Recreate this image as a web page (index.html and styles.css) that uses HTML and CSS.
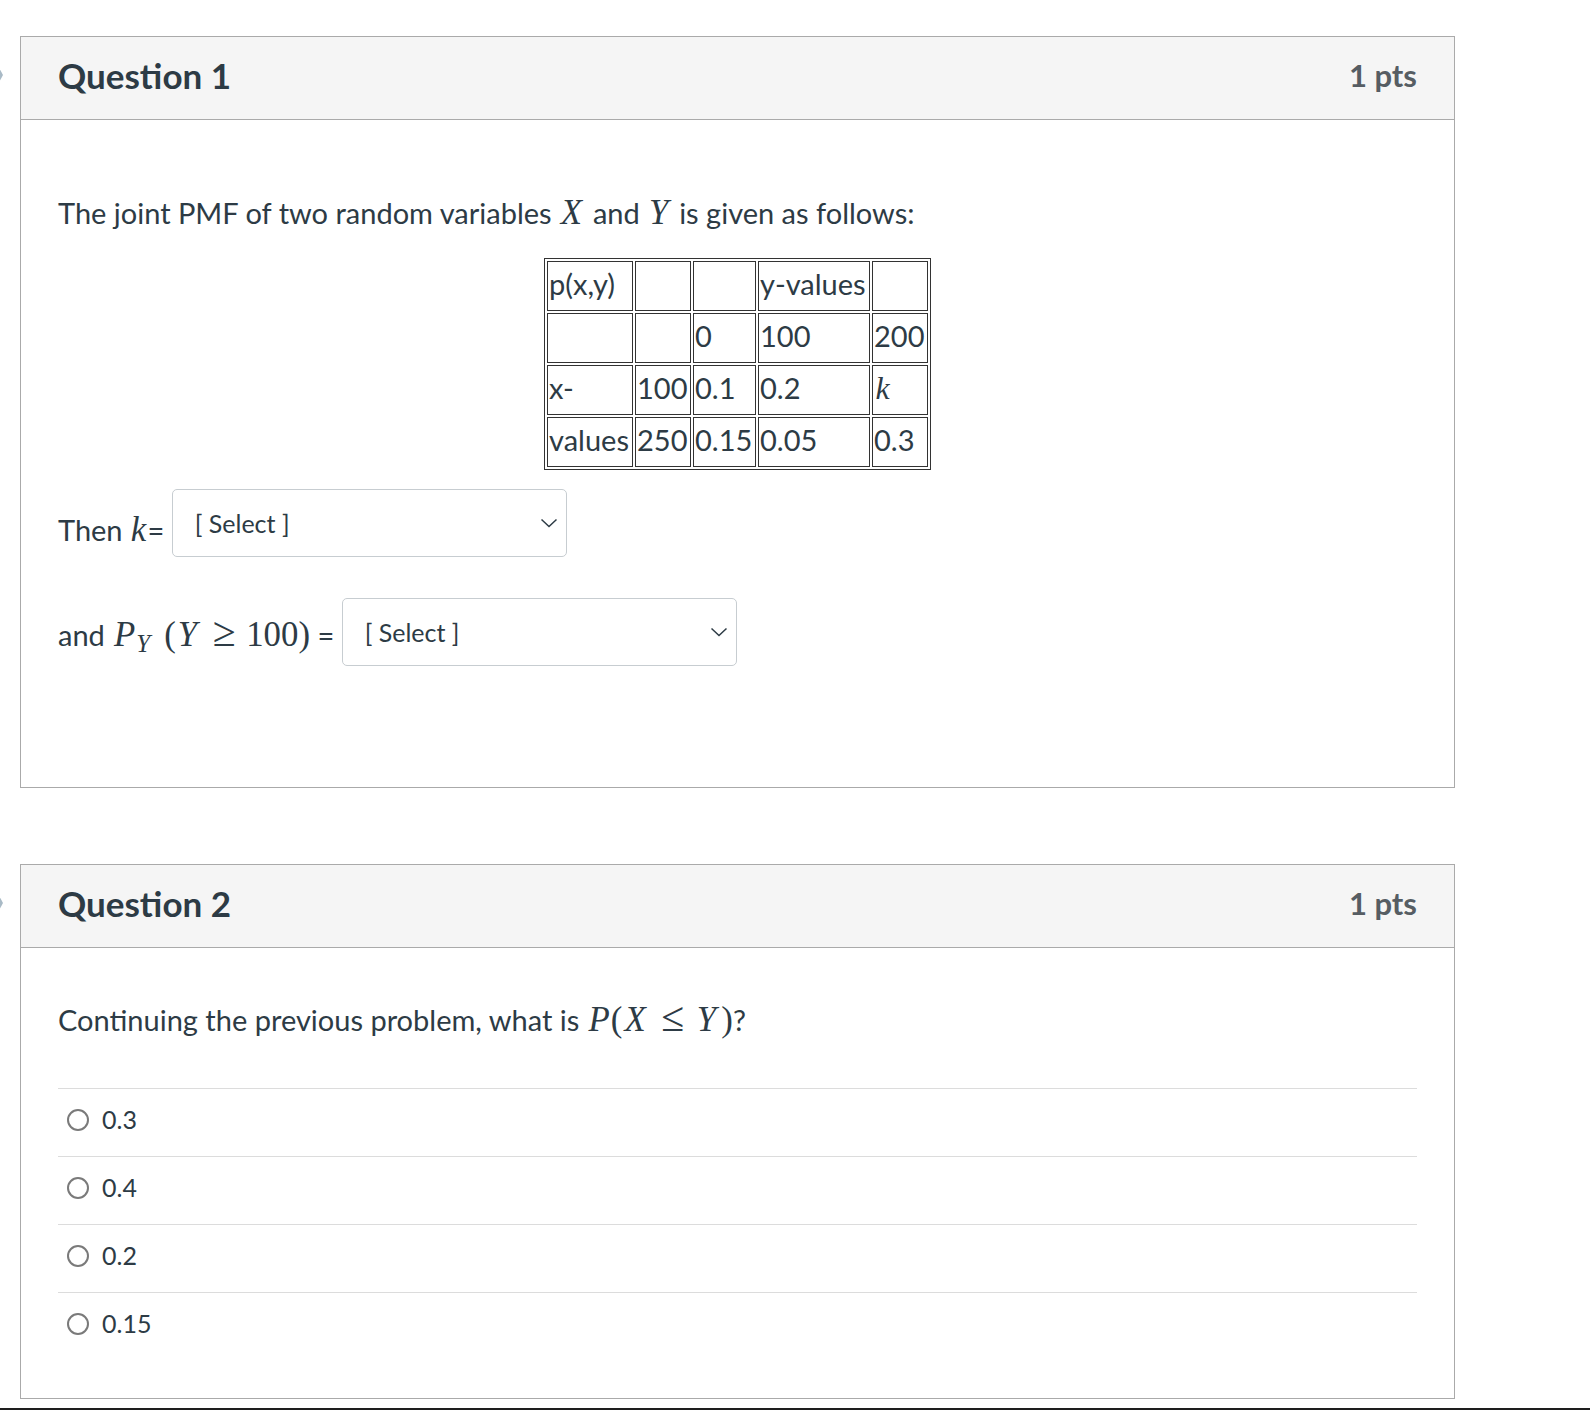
FILE: index.html
```html
<!DOCTYPE html>
<html>
<head>
<meta charset="utf-8">
<link rel="stylesheet" href="styles.css">
</head>
<body>
<div class="page">
  <div class="card card-q1">
    <svg class="flag" width="10" height="24" viewBox="0 0 10 24"><path d="M0 1 L6 12 L0 23 Z" fill="#a9bac6"/></svg>
    <div class="card-header">
      <h2 class="q-title">Question 1</h2>
      <span class="q-pts">1 pts</span>
    </div>
    <div class="card-body body-q1">
      <p class="intro">The joint PMF of two random variables <span class="math"><i>X</i></span> and <span class="math"><i>Y</i></span> is given as follows:</p>
      <table class="pmf">
        <tr><td class="c1">p(x,y)</td><td class="c2"></td><td class="c3"></td><td class="c4">y-values</td><td class="c5"></td></tr>
        <tr><td></td><td></td><td>0</td><td>100</td><td>200</td></tr>
        <tr><td>x-</td><td>100</td><td>0.1</td><td>0.2</td><td><span class="math mk"><i>k</i></span></td></tr>
        <tr><td>values</td><td>250</td><td>0.15</td><td>0.05</td><td>0.3</td></tr>
      </table>
      <p class="line-then">Then <span class="math"><i class="ik">k</i></span>= <span class="select sel-a"><span class="sel-text">[ Select ]</span><svg class="chev" width="18" height="10" viewBox="0 0 18 10"><path d="M1.5 1.5 L9 8.5 L16.5 1.5" fill="none" stroke="#2d3b45" stroke-width="1.5"/></svg></span></p>
      <p class="line-and">and <span class="math"><i class="ip">P</i><sub class="msub">Y</sub><span class="msp"></span>(<i class="iw">Y</i><span class="rel">≥</span>100)</span> = <span class="select sel-b"><span class="sel-text">[ Select ]</span><svg class="chev" width="18" height="10" viewBox="0 0 18 10"><path d="M1.5 1.5 L9 8.5 L16.5 1.5" fill="none" stroke="#2d3b45" stroke-width="1.5"/></svg></span></p>
    </div>
  </div>

  <div class="card card-q2">
    <svg class="flag" width="10" height="24" viewBox="0 0 10 24"><path d="M0 1 L6 12 L0 23 Z" fill="#a9bac6"/></svg>
    <div class="card-header">
      <h2 class="q-title">Question 2</h2>
      <span class="q-pts">1 pts</span>
    </div>
    <div class="card-body body-q2">
      <p class="intro2">Continuing the previous problem, what is <span class="math"><i class="ip">P</i>(<i class="iw">X</i><span class="rel">≤</span><i class="iw">Y</i>)</span>?</p>
      <div class="answers">
        <div class="answer"><span class="radio"></span><span class="ans-label">0.3</span></div>
        <div class="answer"><span class="radio"></span><span class="ans-label">0.4</span></div>
        <div class="answer"><span class="radio"></span><span class="ans-label">0.2</span></div>
        <div class="answer"><span class="radio"></span><span class="ans-label">0.15</span></div>
      </div>
    </div>
  </div>
  <div class="bottom-bar"></div>
</div>
</body>
</html>
```

FILE: styles.css
```css
html { overflow: hidden; }
body {
  margin: 0;
  background: #ffffff;
  font-family: Lato, "Open Sans", "Liberation Sans", sans-serif;
  color: #2d3b45;
}
.page {
  padding-top: 36px;
}
.card {
  position: relative;
  margin-left: 20px;
  width: 1433px;
  border: 1px solid #aaaaaa;
  background: #fff;
}
.card-q2 { margin-top: 76px; }
.flag {
  position: absolute;
  left: -24px;
  top: 26px;
}
.card-header {
  height: 76px;
  padding: 0 37px 6px;
  background: #f5f5f5;
  border-bottom: 1px solid #aaaaaa;
  display: flex;
  align-items: center;
  justify-content: space-between;
}
.q-title {
  margin: 0;
  font-size: 35px;
  font-weight: 700;
  color: #2d3b45;
  line-height: 1;
}
.q-pts {
  font-size: 31px;
  font-weight: 700;
  color: #565d63;
  line-height: 1;
}
.card-body {
  padding: 0 37px;
  font-size: 29px;
  line-height: 1.5;
}
.body-q1 { height: 667px; }
.body-q2 { padding-bottom: 38px; }
p { margin: 0; }
.intro { padding-top: 71px; }

.math {
  font-family: "Liberation Serif", "DejaVu Serif", serif;
  font-size: 1.2em;
  line-height: 1;
  white-space: nowrap;
}
.math i {
  font-style: italic;
  padding: 0 0.1em 0 0.05em;
}
.math i.ip { padding: 0 0.03em 0 0.05em; }
.math i.ik { padding: 0 0.04em 0 0.02em; }
.math i.iw { padding: 0 0.15em 0 0.06em; }
.msub {
  font-size: 0.72em;
  font-style: italic;
  vertical-align: -0.25em;
  line-height: 1;
}
.msp {
  display: inline-block;
  width: 0.4em;
}
.rel {
  font-size: 1.2em;
  margin: 0 0.25em;
}

table.pmf {
  margin: 23px auto 0;
  border: 1px solid #333;
  border-spacing: 2px;
  font-size: 29px;
  line-height: 42px;
}
table.pmf td {
  border: 1px solid #333;
  padding: 1px;
  height: 46px;
  vertical-align: top;
  white-space: nowrap;
}
.c1 { width: 82px; }
.c2 { width: 52px; }
.c3 { width: 59px; }
.c4 { width: 108px; }
.c5 { width: 52px; }
.mk { font-size: 1.1em; }
.math.mk i { padding: 0 0 0 0.05em; }

.line-then { margin-top: 19px; }
.line-and { margin-top: 41px; }
.select {
  display: inline-flex;
  align-items: center;
  justify-content: space-between;
  box-sizing: border-box;
  width: 395px;
  height: 68px;
  border: 1px solid #c7cdd1;
  border-radius: 5px;
  padding: 0 8px 0 22px;
  font-family: Lato, sans-serif;
  font-size: 25px;
  line-height: normal;
  color: #2d3b45;
  background: #fff;
}
.sel-a { vertical-align: 8px; }
.sel-b { vertical-align: 4px; }
.chev { flex: none; }

.intro2 { padding-top: 49px; }
.answers { margin-top: 46px; }
.answer {
  border-top: 1px solid #dcdcdc;
  height: 62px;
  padding-bottom: 5px;
  display: flex;
  align-items: center;
}
.radio {
  box-sizing: border-box;
  width: 22px;
  height: 22px;
  border: 2px solid #7a7a7a;
  border-radius: 50%;
  margin-left: 9px;
  margin-right: 13px;
  flex: none;
}
.ans-label {
  font-size: 25px;
  line-height: 1;
  color: #2d3b45;
}
.bottom-bar {
  margin-top: 9px;
  height: 20px;
  background: #1e1e1e;
}
```
